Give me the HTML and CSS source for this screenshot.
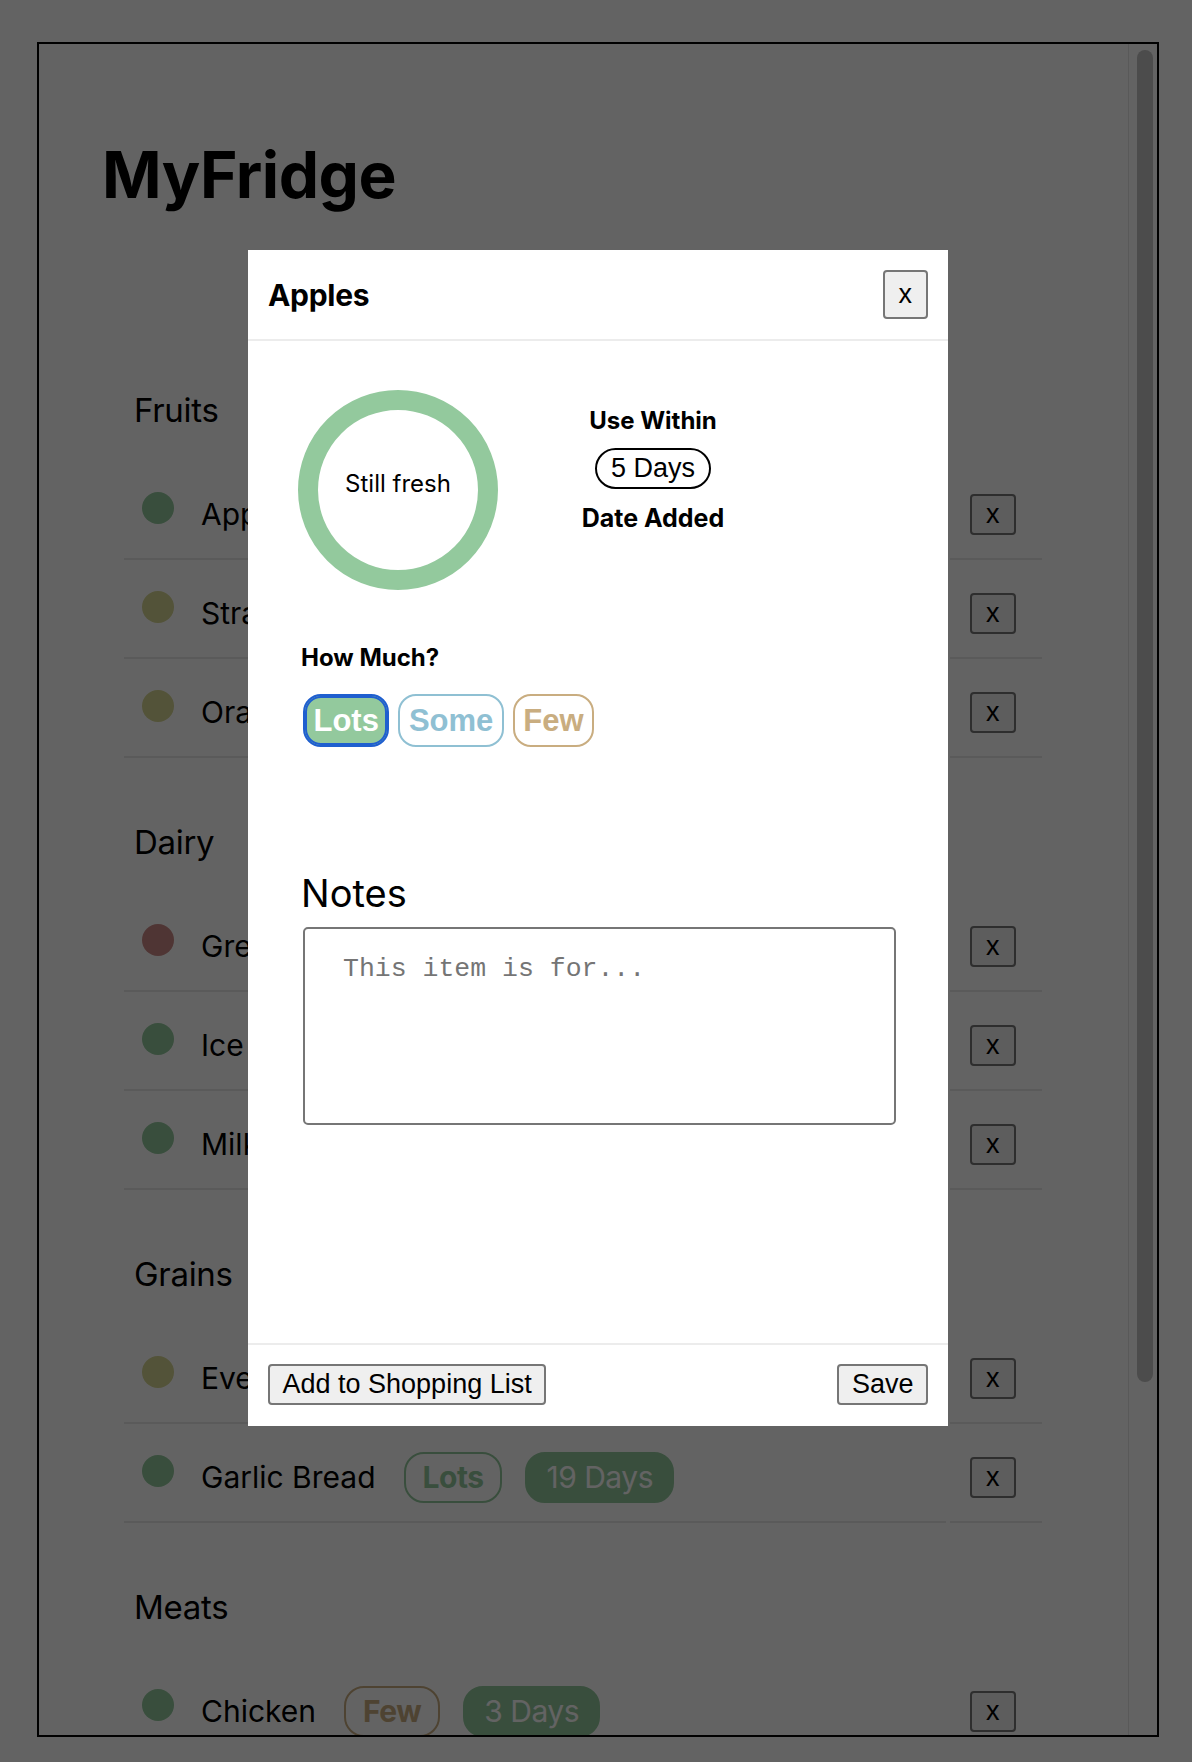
FILE: index.html
```html
<!DOCTYPE html>
<html lang="en">
  <head>
    <meta charset="UTF-8" />
    <meta name="viewport" content="width=device-width, initial-scale=1.0" />
    <title>MyFridge</title>
    <link rel="stylesheet" href="styles.css">
  </head>
  <body>
    <div class="fridge">
      <main class="fridge-content">
        <h1>MyFridge</h1>

        <!-- Fruits -->
        <section class="category">
          <h2>Fruits</h2>
          <div class="item">
            <div class="item-main">
              <span class="dot fresh"></span>
              <span class="item-name">Apples</span>
              <span class="amount lots">Lots</span>
              <span class="days fresh">5 Days</span>
            </div>
            <div class="item-actions"><button type="button">x</button></div>
          </div>
          <div class="item">
            <div class="item-main">
              <span class="dot soon"></span>
              <span class="item-name">Strawberries</span>
              <span class="amount some">Some</span>
              <span class="days soon">2 Days</span>
            </div>
            <div class="item-actions"><button type="button">x</button></div>
          </div>
          <div class="item">
            <div class="item-main">
              <span class="dot soon"></span>
              <span class="item-name">Oranges</span>
              <span class="amount few">Few</span>
              <span class="days soon">3 Days</span>
            </div>
            <div class="item-actions"><button type="button">x</button></div>
          </div>
        </section>

        <!-- Dairy -->
        <section class="category">
          <h2>Dairy</h2>
          <div class="item">
            <div class="item-main">
              <span class="dot old"></span>
              <span class="item-name">Greek Yogurt</span>
              <span class="amount some">Some</span>
              <span class="days old">1 Day</span>
            </div>
            <div class="item-actions"><button type="button">x</button></div>
          </div>
          <div class="item">
            <div class="item-main">
              <span class="dot fresh"></span>
              <span class="item-name">Ice Cream</span>
              <span class="amount lots">Lots</span>
              <span class="days fresh">30 Days</span>
            </div>
            <div class="item-actions"><button type="button">x</button></div>
          </div>
          <div class="item">
            <div class="item-main">
              <span class="dot fresh"></span>
              <span class="item-name">Milk</span>
              <span class="amount some">Some</span>
              <span class="days fresh">7 Days</span>
            </div>
            <div class="item-actions"><button type="button">x</button></div>
          </div>
        </section>

        <!-- Grains -->
        <section class="category">
          <h2>Grains</h2>
          <div class="item">
            <div class="item-main">
              <span class="dot soon"></span>
              <span class="item-name">Everything Bagel</span>
              <span class="amount few">Few</span>
              <span class="days soon">2 Days</span>
            </div>
            <div class="item-actions"><button type="button">x</button></div>
          </div>
          <div class="item">
            <div class="item-main">
              <span class="dot fresh"></span>
              <span class="item-name">Garlic Bread</span>
              <span class="amount lots">Lots</span>
              <span class="days fresh">19 Days</span>
            </div>
            <div class="item-actions"><button type="button">x</button></div>
          </div>
        </section>

        <!-- Meats -->
        <section class="category">
          <h2>Meats</h2>
          <div class="item">
            <div class="item-main">
              <span class="dot fresh"></span>
              <span class="item-name">Chicken</span>
              <span class="amount few">Few</span>
              <span class="days fresh">3 Days</span>
            </div>
            <div class="item-actions"><button type="button">x</button></div>
          </div>
          <div class="item">
            <div class="item-main">
              <span class="dot soon"></span>
              <span class="item-name">Ground Beef</span>
              <span class="amount some">Some</span>
              <span class="days soon">2 Days</span>
            </div>
            <div class="item-actions"><button type="button">x</button></div>
          </div>
        </section>
      </main>

      <!-- scrollbar of the list -->
      <div class="scrollbar">
        <div class="scroll-thumb"></div>
      </div>
    </div>

    <!-- Item details dialog -->
    <div class="overlay"></div>
    <div class="modal">
      <div class="modal-header">
        <h2>Apples</h2>
        <button type="button" class="close-btn">x</button>
      </div>

      <div class="modal-body">
        <div class="summary">
          <div class="freshness">Still fresh</div>
          <div class="shelf-life">
            <h3>Use Within</h3>
            <span class="days-pill">5 Days</span>
            <h3>Date Added</h3>
          </div>
        </div>

        <h3 class="how-much">How Much?</h3>
        <div class="amount-options">
          <button type="button" class="option lots selected">Lots</button>
          <button type="button" class="option some">Some</button>
          <button type="button" class="option few">Few</button>
        </div>

        <h2 class="notes-title">Notes</h2>
        <textarea class="notes" placeholder="This item is for..."></textarea>
      </div>

      <div class="modal-footer">
        <button type="button">Add to Shopping List</button>
        <button type="button">Save</button>
      </div>
    </div>
  </body>
</html>
```

FILE: styles.css
```css
body {
  margin: 0;
  padding: 42px 33px 0 37px;
  font-family: Inter, "Noto Sans", sans-serif;
  background-color: #fff;
  color: #000;
}

button {
  font-family: "Liberation Sans", Arial, sans-serif;
  font-size: 27px;
  color: #000;
  background-color: #efefef;
  border: 2px solid #767676;
  border-radius: 4px;
  padding: 3px 12.5px;
}

/* Fridge list */
.fridge {
  height: 1695px;
  border: 2px solid #000;
  box-sizing: border-box;
  display: flex;
  overflow: hidden;
}

.fridge-content {
  flex: 1;
  padding: 92px 0 0 63px;
}

.scrollbar {
  width: 29px;
  flex-shrink: 0;
  box-sizing: border-box;
  border-left: 1px solid #e6e6e6;
}

.scroll-thumb {
  height: 1332px;
  margin: 6px 4px 0 8px;
  border-radius: 8px;
  background-color: #c3c3c3;
}

h1 {
  margin: 0 0 176px;
  font-size: 64px;
  line-height: 78px;
  font-weight: 700;
  letter-spacing: -0.5px;
}

.category {
  margin-left: 18px;
}

.category h2 {
  margin: 64px 0 31px;
  padding-left: 14px;
  font-size: 33px;
  line-height: 40px;
  font-weight: 400;
  letter-spacing: -0.3px;
}

.item {
  display: grid;
  grid-template-columns: 822px 92px;
  column-gap: 4px;
  margin: 0 4px;
}

.item-main,
.item-actions {
  height: 99px;
  box-sizing: border-box;
  padding-top: 9px;
  border-bottom: 2px solid #e8e8e8;
  display: flex;
  align-items: center;
}

.item-main {
  padding-left: 18px;
}

.item-actions {
  padding-left: 20px;
}

.item-actions button {
  padding: 3px 14px;
}

.dot {
  width: 32px;
  height: 32px;
  border-radius: 50%;
  margin-bottom: 12px;
}

.item-name {
  margin-left: 27px;
  font-size: 30px;
}

.amount,
.days {
  font-size: 30px;
  line-height: 37px;
  padding: 5px 17px;
  border: 2px solid;
  border-radius: 20px;
  letter-spacing: -0.5px;
}

.amount {
  margin-left: 28px;
  font-weight: 700;
  background-color: #fff;
}

.days {
  margin-left: 23px;
  padding: 5px 19px;
  color: #fff;
}

.amount.lots { color: #93c99d; border-color: #93c99d; }
.amount.some { color: #8fc0d3; border-color: #8fc0d3; }
.amount.few { color: #c9ad80; border-color: #c9ad80; }

.fresh { background-color: #93c99d; border-color: #93c99d; }
.soon { background-color: #d6d692; border-color: #d6d692; }
.old { background-color: #cc8a87; border-color: #cc8a87; }

/* Dialog */
.overlay {
  position: fixed;
  inset: 0;
  background-color: rgba(0, 0, 0, 0.61);
}

.modal {
  position: fixed;
  top: 250px;
  left: 248px;
  width: 700px;
  height: 1176px;
  background-color: #fff;
  display: flex;
  flex-direction: column;
}

.modal-header {
  display: flex;
  justify-content: space-between;
  align-items: center;
  padding: 20px;
  border-bottom: 2px solid #ececec;
}

.modal-header h2 {
  margin: 0;
  font-size: 30px;
  font-weight: 700;
  letter-spacing: -0.3px;
}

.modal-header .close-btn {
  padding: 7px 14px;
}

.modal-body {
  flex: 1;
  padding: 49px 53px 0 55px;
}

.summary {
  display: flex;
  align-items: flex-start;
}

.freshness {
  width: 200px;
  height: 200px;
  box-sizing: border-box;
  margin-left: -5px;
  padding-bottom: 14px;
  border: 20px solid #93c99d;
  border-radius: 50%;
  display: flex;
  align-items: center;
  justify-content: center;
  font-size: 24px;
}

.shelf-life {
  width: 190px;
  margin: 16px 0 0 60px;
  display: flex;
  flex-direction: column;
  align-items: center;
}

.modal-body h3 {
  margin: 0;
  font-size: 24px;
  line-height: 30px;
  font-weight: 700;
}

.shelf-life h3:last-child {
  font-size: 25px;
}

.days-pill {
  margin: 12px 0 14px;
  padding: 3px 13.5px;
  font-family: "Liberation Sans", Arial, sans-serif;
  font-size: 27px;
  line-height: 31px;
  border: 2px solid #000;
  border-radius: 999px;
}

.modal-body .how-much {
  margin-top: 53px;
  margin-left: -2px;
}

.amount-options {
  display: flex;
  gap: 9px;
  margin-top: 21px;
}

.option {
  font-size: 31px;
  font-weight: 700;
  line-height: 37px;
  padding: 6px 8.5px;
  background-color: #fff;
  border-radius: 18px;
}

.option.lots { color: #fff; background-color: #93c99d; border-color: #93c99d; }
.option.some { color: #8fc0d3; border-color: #8fc0d3; }
.option.few { color: #c9ad80; border-color: #c9ad80; }

.option.selected {
  border-color: #1f5fcf;
  box-shadow: inset 0 0 0 2px #1f5fcf;
}

.notes-title {
  margin: 124px 0 0 -2px;
  font-size: 38px;
  line-height: 44px;
  font-weight: 400;
}

.notes {
  display: block;
  width: 593px;
  height: 198px;
  box-sizing: border-box;
  margin-top: 12px;
  padding: 25px 38px;
  font-family: "Liberation Mono", "Courier New", monospace;
  font-size: 26.5px;
  border: 2px solid #767676;
  border-radius: 5px;
  resize: none;
}

.notes::placeholder {
  color: #757575;
}

.modal-footer {
  display: flex;
  justify-content: space-between;
  padding: 19px 20px 21px;
  border-top: 2px solid #ececec;
}
```
